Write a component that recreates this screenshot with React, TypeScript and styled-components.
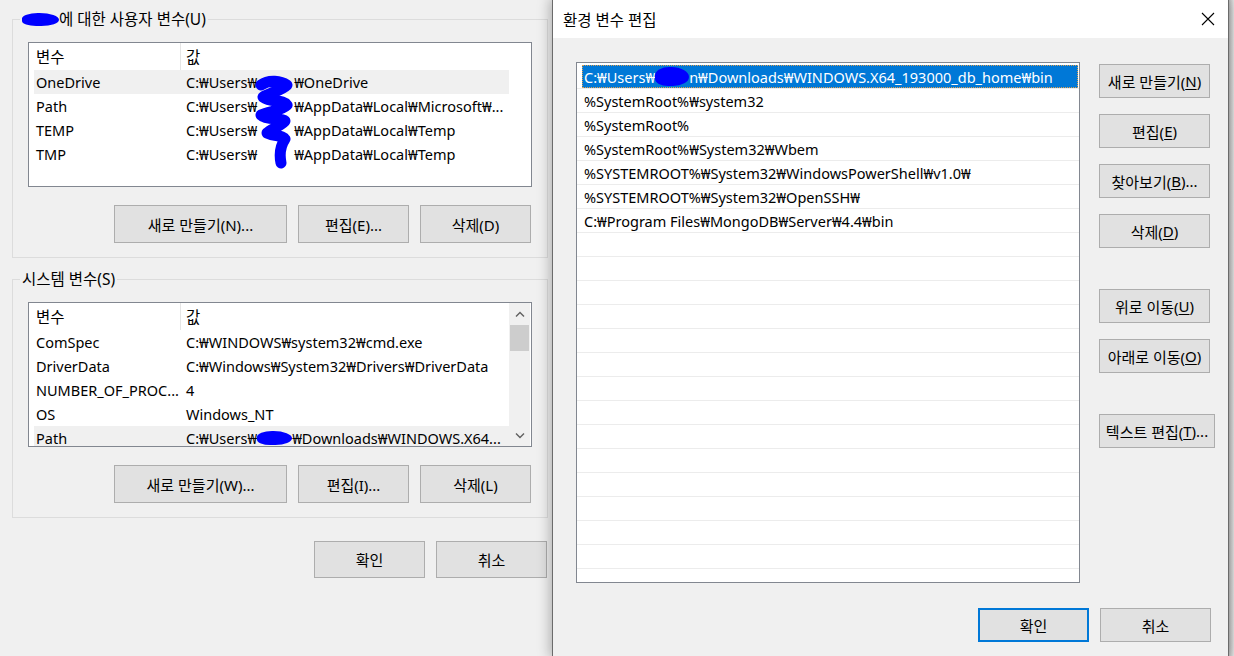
import React from "react";
import styled, { createGlobalStyle, css } from "styled-components";

const FONT = `"Noto Sans", "Noto Sans CJK KR", sans-serif`;

const GlobalStyle = createGlobalStyle`
  html, body { margin: 0; padding: 0; }
  body {
    background: #f0f0f0;
    font-family: ${FONT};
    font-size: 14.5px;
    color: #000;
    overflow: hidden;
  }
  #root { width: 1234px; height: 656px; }
  *, *::before, *::after { box-sizing: border-box; }
`;

const Screen = styled.div`
  display: flex;
  width: 1234px;
  height: 656px;
  overflow: hidden;
  background: #f0f0f0;
`;

/* ---------- main (background) window ---------- */
const MainWindow = styled.div`
  width: 552px;
  flex-shrink: 0;
  display: flex;
  flex-direction: column;
  padding: 9px 5px 0 12px;
`;

const Group = styled.fieldset<{ $mt: number }>`
  margin: ${(p) => p.$mt}px 0 0 0;
  width: 536px;
  min-width: 0;
  border: 1px solid #dcdcdc;
  padding: 13px 15px 14px 15px;
`;

const Legend = styled.legend`
  margin-left: -8px;
  padding: 0 2px;
  height: 20px;
  line-height: 20px;
  font-size: 15.5px;
  display: flex;
  align-items: center;
  white-space: nowrap;
`;

const Redact = styled.span<{ $w: number; $h: number }>`
  display: inline-block;
  width: ${(p) => p.$w}px;
  height: ${(p) => p.$h}px;
  background: #0000ff;
  border-radius: 45% 55% 50% 40%;
  vertical-align: middle;
`;

const Gap = styled.span<{ $w: number }>`
  display: inline-block;
  width: ${(p) => p.$w}px;
`;

const ListBox = styled.div`
  position: relative;
  height: 145px;
  background: #fff;
  border: 1px solid #828790;
  display: flex;
  overflow: hidden;
`;

const Table = styled.div`
  width: 480px;
  flex-shrink: 0;
  display: flex;
  flex-direction: column;
`;

const HeaderRow = styled.div`
  display: grid;
  grid-template-columns: 152px 1fr;
  height: 27px;
  flex-shrink: 0;
`;

const HeaderCell = styled.div<{ $first?: boolean }>`
  display: flex;
  align-items: center;
  font-size: 15.5px;
  padding-left: ${(p) => (p.$first ? 7 : 5)}px;
  border-right: ${(p) => (p.$first ? "1px solid #e5e5e5" : "none")};
`;

const DataRow = styled.div<{ $hl?: boolean }>`
  display: grid;
  grid-template-columns: 146px 1fr;
  margin-left: 5px;
  height: 24px;
  flex-shrink: 0;
  background: ${(p) => (p.$hl ? "#f0f0f0" : "transparent")};
`;

const Cell = styled.div<{ $first?: boolean }>`
  display: flex;
  align-items: center;
  padding-left: ${(p) => (p.$first ? 2 : 6)}px;
  white-space: nowrap;
  overflow: hidden;
`;

const ScrollBar = styled.div`
  width: 21px;
  flex-shrink: 0;
  background: #f0f0f0;
  display: flex;
  flex-direction: column;
`;

const ScrollArrow = styled.div`
  height: 21px;
  display: flex;
  align-items: center;
  justify-content: center;
`;

const ScrollTrack = styled.div`
  flex: 1;
  padding: 1px 1px 0 1px;
`;

const ScrollThumb = styled.div`
  height: 26px;
  background: #cdcdcd;
`;

const ButtonRow = styled.div<{ $mt: number; $pr: number }>`
  display: flex;
  justify-content: flex-end;
  gap: 11px;
  margin-top: ${(p) => p.$mt}px;
  padding-right: ${(p) => p.$pr}px;
`;

const Button = styled.button<{ $w: number; $h: number; $default?: boolean }>`
  width: ${(p) => p.$w}px;
  height: ${(p) => p.$h}px;
  flex-shrink: 0;
  background: #e1e1e1;
  border: 1px solid #adadad;
  font-family: ${FONT};
  font-size: 15px;
  color: #000;
  padding: 0;
  white-space: nowrap;
  display: flex;
  align-items: center;
  justify-content: center;
  ${(p) =>
    p.$default &&
    css`
      border: 2px solid #0078d7;
    `}
`;

const Mn = styled.span`
  text-decoration: underline;
  text-underline-offset: 2px;
`;

/* ---------- dialog ---------- */
const Dialog = styled.div`
  position: relative;
  z-index: 1;
  width: 677px;
  height: 656px;
  flex-shrink: 0;
  background: #f0f0f0;
  border-left: 1px solid #6b6b6b;
  border-right: 1px solid #6b6b6b;
  box-shadow: 0 0 12px 2px rgba(0, 0, 0, 0.28);
  display: flex;
  flex-direction: column;
`;

const TitleBar = styled.div`
  height: 38px;
  flex-shrink: 0;
  background: #fff;
  display: flex;
  align-items: center;
  justify-content: space-between;
  padding: 0 13px 0 10px;
  font-size: 15.5px;
`;

const DialogBody = styled.div`
  flex: 1;
  display: flex;
  flex-direction: column;
  padding: 24px 17px 0 23px;
`;

const ContentRow = styled.div`
  display: flex;
  gap: 19px;
`;

const PathList = styled.div`
  width: 504px;
  height: 521px;
  flex-shrink: 0;
  background: #fff;
  border: 1px solid #828790;
  padding-top: 2px;
  overflow: hidden;
`;

const PathRow = styled.div`
  height: 24px;
  border-bottom: 1px solid #ececec;
`;

const PathItem = styled.div<{ $selected?: boolean }>`
  margin: 0 1px 0 5px;
  height: 23px;
  padding-left: 2px;
  display: flex;
  align-items: center;
  white-space: nowrap;
  overflow: hidden;
  ${(p) =>
    p.$selected &&
    css`
      background: #0078d7;
      color: #fff;
      outline: 1px dotted #e0a050;
      outline-offset: -1px;
    `}
`;

const SideColumn = styled.div`
  display: flex;
  flex-direction: column;
  align-items: flex-start;
  gap: 16px;
  margin-top: 2px;
  width: 111px;
`;

const SideButton = styled(Button)<{ $push?: boolean }>`
  margin-top: ${(p) => (p.$push ? 25 : 0)}px;
`;

const DialogFooter = styled.div`
  display: flex;
  justify-content: flex-end;
  gap: 11px;
  margin-top: 25px;
`;

const ShadowGutter = styled.div`
  flex: 1;
  background: linear-gradient(to right, #c4c4c4, #ebebeb);
`;

/* ---------- icons ---------- */
const Chevron = ({ up }: { up?: boolean }) => (
  <svg width="10" height="6" viewBox="0 0 10 6">
    <path
      d={up ? "M1 5.5 L5 1.5 L9 5.5" : "M1 0.5 L5 4.5 L9 0.5"}
      fill="none"
      stroke="#606060"
      strokeWidth="1.4"
    />
  </svg>
);

const CloseIcon = () => (
  <svg width="14" height="14" viewBox="0 0 14 14">
    <path d="M1 1 L13 13 M13 1 L1 13" stroke="#000" strokeWidth="1.1" fill="none" />
  </svg>
);

const ScribbleSvg = styled.svg`
  position: absolute;
  left: 222px;
  top: 32px;
  pointer-events: none;
`;

const UserScribble = () => (
  <ScribbleSvg width="44" height="96" viewBox="0 0 44 96">
    <path
      d="M10 10 C 18 4, 30 6, 36 10 C 30 16, 18 18, 12 22 C 20 28, 32 24, 36 30 C 30 36, 18 36, 10 40 C 16 46, 30 42, 34 46 C 28 52, 20 54, 16 58 C 24 62, 32 60, 34 64 C 30 70, 28 78, 30 88"
      fill="none"
      stroke="#0000ff"
      strokeWidth="11"
      strokeLinecap="round"
      strokeLinejoin="round"
    />
  </ScribbleSvg>
);

/* ---------- data ---------- */
type Var = { name: string; value: React.ReactNode; hl?: boolean };

const userVars: Var[] = [
  { name: "OneDrive", value: <>C:₩Users₩<Gap $w={37} />₩OneDrive</>, hl: true },
  { name: "Path", value: <>C:₩Users₩<Gap $w={37} />₩AppData₩Local₩Microsoft₩...</> },
  { name: "TEMP", value: <>C:₩Users₩<Gap $w={37} />₩AppData₩Local₩Temp</> },
  { name: "TMP", value: <>C:₩Users₩<Gap $w={37} />₩AppData₩Local₩Temp</> },
];

const sysVars: Var[] = [
  { name: "ComSpec", value: "C:₩WINDOWS₩system32₩cmd.exe" },
  { name: "DriverData", value: "C:₩Windows₩System32₩Drivers₩DriverData" },
  { name: "NUMBER_OF_PROC...", value: "4" },
  { name: "OS", value: "Windows_NT" },
  {
    name: "Path",
    value: (
      <>
        C:₩Users₩<Redact $w={35} $h={14} />₩Downloads₩WINDOWS.X64...
      </>
    ),
    hl: true,
  },
];

const paths: React.ReactNode[] = [
  <>
    C:₩Users₩<Redact $w={34} $h={19} />n₩Downloads₩WINDOWS.X64_193000_db_home₩bin
  </>,
  "%SystemRoot%₩system32",
  "%SystemRoot%",
  "%SystemRoot%₩System32₩Wbem",
  "%SYSTEMROOT%₩System32₩WindowsPowerShell₩v1.0₩",
  "%SYSTEMROOT%₩System32₩OpenSSH₩",
  "C:₩Program Files₩MongoDB₩Server₩4.4₩bin",
];

const VarTable = ({ rows }: { rows: Var[] }) => (
  <Table>
    <HeaderRow>
      <HeaderCell $first>변수</HeaderCell>
      <HeaderCell>값</HeaderCell>
    </HeaderRow>
    {rows.map((r, i) => (
      <DataRow key={i} $hl={r.hl}>
        <Cell $first>{r.name}</Cell>
        <Cell>{r.value}</Cell>
      </DataRow>
    ))}
  </Table>
);

export default function App() {
  const emptyRows = 22 - paths.length;
  return (
    <>
      <GlobalStyle />
      <Screen>
        <MainWindow>
          <Group $mt={0}>
            <Legend>
              <Redact $w={37} $h={13} />에 대한 사용자 변수(U)
            </Legend>
            <ListBox>
              <VarTable rows={userVars} />
              <UserScribble />
            </ListBox>
            <ButtonRow $mt={18} $pr={1}>
              <Button $w={173} $h={38}>새로 만들기(N)...</Button>
              <Button $w={111} $h={38}>편집(E)...</Button>
              <Button $w={111} $h={38}>삭제(D)</Button>
            </ButtonRow>
          </Group>

          <Group $mt={11}>
            <Legend>시스템 변수(S)</Legend>
            <ListBox>
              <VarTable rows={sysVars} />
              <ScrollBar>
                <ScrollArrow>
                  <Chevron up />
                </ScrollArrow>
                <ScrollTrack>
                  <ScrollThumb />
                </ScrollTrack>
                <ScrollArrow>
                  <Chevron />
                </ScrollArrow>
              </ScrollBar>
            </ListBox>
            <ButtonRow $mt={18} $pr={1}>
              <Button $w={173} $h={38}>새로 만들기(W)...</Button>
              <Button $w={111} $h={38}>편집(I)...</Button>
              <Button $w={111} $h={38}>삭제(L)</Button>
            </ButtonRow>
          </Group>

          <ButtonRow $mt={23} $pr={0}>
            <Button $w={111} $h={37}>확인</Button>
            <Button $w={111} $h={37}>취소</Button>
          </ButtonRow>
        </MainWindow>

        <Dialog>
          <TitleBar>
            <span>환경 변수 편집</span>
            <CloseIcon />
          </TitleBar>
          <DialogBody>
            <ContentRow>
              <PathList>
                {paths.map((p, i) => (
                  <PathRow key={i}>
                    <PathItem $selected={i === 0}>{p}</PathItem>
                  </PathRow>
                ))}
                {Array.from({ length: emptyRows }).map((_, i) => (
                  <PathRow key={`e${i}`} />
                ))}
              </PathList>
              <SideColumn>
                <SideButton $w={111} $h={34}>
                  새로 만들기(<Mn>N</Mn>)
                </SideButton>
                <SideButton $w={111} $h={34}>
                  편집(<Mn>E</Mn>)
                </SideButton>
                <SideButton $w={111} $h={34}>
                  찾아보기(<Mn>B</Mn>)...
                </SideButton>
                <SideButton $w={111} $h={34}>
                  삭제(<Mn>D</Mn>)
                </SideButton>
                <SideButton $w={111} $h={34} $push>
                  위로 이동(<Mn>U</Mn>)
                </SideButton>
                <SideButton $w={111} $h={34}>
                  아래로 이동(<Mn>O</Mn>)
                </SideButton>
                <SideButton $w={116} $h={34} $push>
                  텍스트 편집(<Mn>T</Mn>)...
                </SideButton>
              </SideColumn>
            </ContentRow>
            <DialogFooter>
              <Button $w={111} $h={34} $default>
                확인
              </Button>
              <Button $w={111} $h={34}>
                취소
              </Button>
            </DialogFooter>
          </DialogBody>
        </Dialog>
        <ShadowGutter />
      </Screen>
    </>
  );
}
